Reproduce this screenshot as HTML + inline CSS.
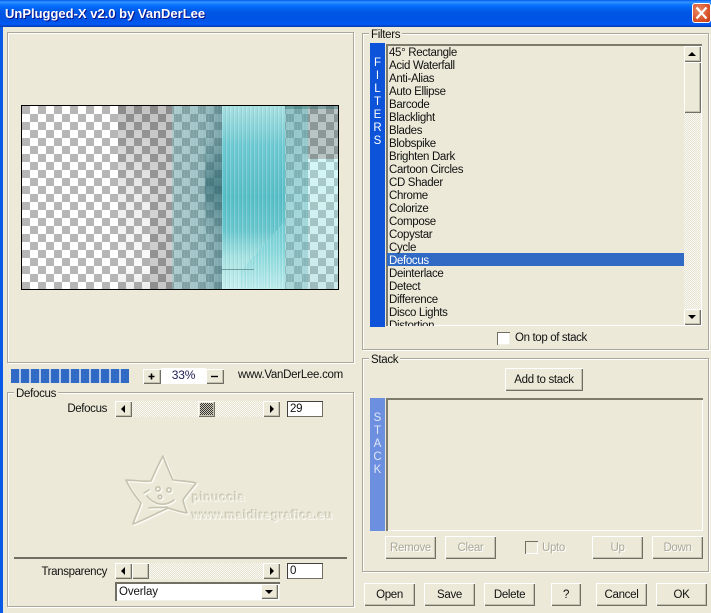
<!DOCTYPE html>
<html><head><meta charset="utf-8"><title>UnPlugged-X</title>
<style>
html,body{margin:0;padding:0}
body{width:711px;height:613px;overflow:hidden;background:#ece9d8;position:relative;font-family:"Liberation Sans",sans-serif;font-size:11px;color:#111}
div,span{position:absolute;box-sizing:border-box}
.t{white-space:nowrap;line-height:15px;height:15px}
.s{font-size:11.5px;letter-spacing:-.36px}
.fr{border:1px solid #aca899;box-shadow:inset 1px 1px #fff,1px 1px #fff}
.lb{background:#ece9d8;padding:0 2px;line-height:15px;height:13px;white-space:nowrap;font-size:11.5px;letter-spacing:-.3px}
.b{background:#ece9d8;box-shadow:inset 1px 1px #fff,inset -1px -1px #716f64,inset -2px -2px #c4c1b0;text-align:center;font-size:11.5px;letter-spacing:-.32px;white-space:nowrap;line-height:25px}
.dis{color:#aca899;text-shadow:1px 1px #fff}
.sink{background:#ece9d8;box-shadow:inset 2px 2px #7d7b6c,inset -1px -1px #fff}
.inp{background:#fff;box-shadow:inset 1px 1px #404040,inset -1px -1px #716f64;font-size:11.5px;line-height:16px;padding-left:3px;letter-spacing:-.3px}
.dith{background:repeating-conic-gradient(#f9f8f2 0 25%,#e6e3d2 0 50%) 0 0/2px 2px}
.bar{color:#fff;text-align:center;font-size:11.5px;line-height:15px;width:15px}
.u{width:0;height:0;border-left:4px solid transparent;border-right:4px solid transparent;border-bottom:4px solid #000}
.d{width:0;height:0;border-left:4px solid transparent;border-right:4px solid transparent;border-top:4px solid #000}
.l{width:0;height:0;border-top:4px solid transparent;border-bottom:4px solid transparent;border-right:4px solid #000}
.r{width:0;height:0;border-top:4px solid transparent;border-bottom:4px solid transparent;border-left:4px solid #000}
.i{left:389px;font-size:11.5px;letter-spacing:-.34px;line-height:15px;height:15px;white-space:nowrap}
</style></head><body>

<!-- title bar -->
<div style="left:0;top:0;width:711px;height:27px;background:linear-gradient(#0058ee 0,#3593ff 2px,#288eff 3px,#127dff 4px,#036ffc 6px,#0262ee 9px,#0057e5 12px,#0054e3 18px,#0055eb 22px,#005bf5 24px,#0046c8 26px,#003dae 27px)"></div>
<div style="left:5px;top:6px;color:#fff;font-weight:bold;font-size:13px;line-height:16px;white-space:nowrap;text-shadow:1px 1px #0f1089;letter-spacing:0">UnPlugged-X v2.0 by VanDerLee</div>
<div style="left:692px;top:3px;width:19px;height:20px;border:1px solid #fff;border-radius:3px;background:radial-gradient(circle at 35% 35%,#e88a66,#d9542b 60%,#c23a14)">
<svg width="17" height="18" style="position:absolute;left:0;top:0"><path d="M3.5 3.5L13.5 14.5M13.5 3.5L3.5 14.5" stroke="#fff" stroke-width="2.2" fill="none"/></svg></div>
<div style="left:0;top:27px;width:3px;height:586px;background:#0a5ae8"></div>

<!-- preview frame -->
<div class="fr" style="left:7px;top:32px;width:347px;height:331px"></div>
<div style="left:21px;top:105px;width:318px;height:185px;border:1px solid #000;overflow:hidden;background:repeating-conic-gradient(#fff 0 25%,#b6b6b6 0 50%) 0 0/16px 16px">
 <div style="left:96px;top:0;width:32px;height:183px;background:linear-gradient(rgba(0,0,0,.24),rgba(0,0,0,.07) 50%,rgba(0,0,0,.02) 88%,rgba(0,0,0,.08))"></div>
 <div style="left:128px;top:0;width:22px;height:183px;background:linear-gradient(rgba(0,0,0,.24),rgba(0,0,0,.16) 50%,rgba(0,0,0,.22))"></div>
 <div style="left:150px;top:0;width:50px;height:183px;background:repeating-linear-gradient(90deg,rgba(255,255,255,.08) 0 1px,transparent 1px 3px),linear-gradient(90deg,rgba(70,140,145,.45),rgba(70,140,145,.52) 60%,rgba(50,115,125,.66))"></div>
 <div style="left:183px;top:30px;width:17px;height:100px;background:linear-gradient(transparent,rgba(30,90,100,.5) 50%,transparent)"></div>
 <div style="left:200px;top:0;width:63px;height:183px;background:repeating-linear-gradient(90deg,rgba(255,255,255,.2) 0 1px,transparent 1px 3px,rgba(0,80,90,.07) 3px 4px),linear-gradient(#a8e0e2 0,#6fcad2 22%,#58bfc8 50%,#6ac8ce 68%,#a6e2e2 82%,#c8efef 100%)"></div>
 <div style="left:200px;top:0;width:63px;height:183px;background:repeating-linear-gradient(90deg,rgba(255,255,255,.22) 0 1px,transparent 1px 3px),linear-gradient(rgba(110,205,210,.6),rgba(120,210,215,.62) 80%,rgba(170,228,230,.45));clip-path:polygon(100% 63%,100% 100%,30% 100%,30% 90%)"></div>
 <div style="left:200px;top:163px;width:32px;height:1px;background:#6f9d9e"></div>
 <div style="left:263px;top:0;width:23px;height:183px;background:repeating-linear-gradient(90deg,rgba(255,255,255,.08) 0 1px,transparent 1px 3px),linear-gradient(rgba(70,150,155,.6),rgba(90,185,190,.58) 50%,rgba(100,180,185,.55))"></div>
 <div style="left:286px;top:0;width:30px;height:53px;background:rgba(70,100,100,.38)"></div>
 <div style="left:286px;top:53px;width:30px;height:130px;background:linear-gradient(rgba(150,235,235,.4),rgba(120,195,200,.38))"></div>
 <div style="left:263px;top:0;width:53px;height:3px;background:rgba(40,110,110,.4)"></div>
</div>

<!-- progress -->
<div style="left:11px;top:369px;width:118px;height:14px;background:repeating-linear-gradient(90deg,#316ac5 0 8px,#b4c8e8 8px 10px)"></div>
<div class="b" style="left:143px;top:369px;width:18px;height:15px"></div>
<svg width="18" height="15" style="position:absolute;left:143px;top:369px"><path d="M5.5 7.5h6M8.5 4.5v6" stroke="#000" stroke-width="1.6"/></svg>
<div style="left:161px;top:368px;width:45px;height:16px;background:#fff;text-align:center;line-height:15px;font-size:12px;color:#1c1c50;letter-spacing:-.2px">33%</div>
<div class="b" style="left:206px;top:369px;width:18px;height:15px"></div>
<svg width="18" height="15" style="position:absolute;left:206px;top:369px"><path d="M5 7.5h7" stroke="#000" stroke-width="1.4"/></svg>
<div class="t s" style="left:238px;top:368px;letter-spacing:-.28px">www.VanDerLee.com</div>

<!-- defocus frame -->
<div class="fr" style="left:7px;top:392px;width:347px;height:215px"></div>
<div class="lb" style="left:14px;top:387px">Defocus</div>
<div class="t s" style="right:604px;top:402px">Defocus</div>
<div class="dith" style="left:132px;top:401px;width:132px;height:16px"></div>
<div class="b" style="left:115px;top:401px;width:17px;height:16px"><div class="l" style="left:6px;top:4px"></div></div>
<div class="b" style="left:263px;top:401px;width:17px;height:16px"><div class="r" style="left:7px;top:4px"></div></div>
<div class="b" style="left:198px;top:401px;width:17px;height:16px"><div style="left:2px;top:2px;width:13px;height:12px;background:repeating-conic-gradient(#333 0 25%,#d0cdbc 0 50%) 0 0/2px 2px"></div></div>
<div class="inp" style="left:287px;top:401px;width:36px;height:16px">29</div>

<!-- watermark -->
<svg width="90" height="80" viewBox="0 0 90 80" style="position:absolute;left:120px;top:450px">
<g fill="none" stroke-linejoin="round" stroke-linecap="round">
<g stroke="#fbfaf2" stroke-width="2.4" transform="translate(1 1)">
<path d="M43 6C46 14 50 24 53 30C60 31 69 31 76 33C71 40 66 45 63 50C64 55 66 60 67 63C60 62 54 60 48 58C37 63 24 70 13 74C15 67 19 60 21 53C15 46 9 37 6 30C14 30 24 32 31 31C35 22 39 13 43 6Z"/>
<path d="M24 43l5-3M27 46c7 9 18 11 27 4M29 58c6-1 13 0 18-1"/><circle cx="38" cy="39" r="2.2"/><circle cx="49" cy="40" r="2.2"/><circle cx="40" cy="47" r="1.8"/>
</g>
<g stroke="#c6c2af" stroke-width="1.6">
<path d="M43 6C46 14 50 24 53 30C60 31 69 31 76 33C71 40 66 45 63 50C64 55 66 60 67 63C60 62 54 60 48 58C37 63 24 70 13 74C15 67 19 60 21 53C15 46 9 37 6 30C14 30 24 32 31 31C35 22 39 13 43 6Z"/>
<path d="M24 43l5-3M27 46c7 9 18 11 27 4M29 58c6-1 13 0 18-1"/><circle cx="38" cy="39" r="2.2"/><circle cx="49" cy="40" r="2.2"/><circle cx="40" cy="47" r="1.8"/>
</g></g></svg>
<div class="t" style="left:192px;top:490px;font-size:12px;font-weight:bold;letter-spacing:.55px;color:#e6e3d3;text-shadow:1px 1px #faf9f1,-1px -1px #c6c2af">pinuccia</div>
<div class="t" style="left:192px;top:508px;font-size:12px;font-weight:bold;letter-spacing:.5px;color:#e6e3d3;text-shadow:1px 1px #faf9f1,-1px -1px #c6c2af">www.maidiregrafica.eu</div>

<div style="left:14px;top:557px;width:333px;height:2px;background:#716f64"></div>
<div class="t s" style="right:604px;top:565px">Transparency</div>
<div class="dith" style="left:132px;top:563px;width:132px;height:16px"></div>
<div class="b" style="left:115px;top:563px;width:17px;height:16px"><div class="l" style="left:6px;top:4px"></div></div>
<div class="b" style="left:132px;top:563px;width:17px;height:16px"></div>
<div class="b" style="left:263px;top:563px;width:17px;height:16px"><div class="r" style="left:7px;top:4px"></div></div>
<div class="inp" style="left:287px;top:563px;width:36px;height:16px">0</div>
<div style="left:115px;top:582px;width:165px;height:19px;background:#fff;box-shadow:inset 2px 2px #716f64,inset -1px -1px #f4f2e8;font-size:11.5px;line-height:21px;padding-left:4px;letter-spacing:-.1px">Overlay</div>
<div class="b" style="left:261px;top:584px;width:17px;height:15px"><div class="d" style="left:4px;top:6px"></div></div>

<!-- filters frame -->
<div class="fr" style="left:362px;top:33px;width:347px;height:317px"></div>
<div class="lb" style="left:369px;top:28px">Filters</div>
<div style="left:370px;top:43px;width:15px;height:284px;background:#0d53d9"></div>
<div class="bar" style="left:370px;top:56px">F</div><div class="bar" style="left:370px;top:69px">I</div><div class="bar" style="left:370px;top:82px">L</div><div class="bar" style="left:370px;top:95px">T</div><div class="bar" style="left:370px;top:108px">E</div><div class="bar" style="left:370px;top:121px">R</div><div class="bar" style="left:370px;top:134px">S</div>
<div class="sink" style="left:386px;top:44px;width:316px;height:282px;overflow:hidden"></div>
<div style="left:387px;top:253px;width:297px;height:13px;background:#316ac5"></div>
<div class="i" style="top:46px">45° Rectangle</div>
<div class="i" style="top:59px">Acid Waterfall</div>
<div class="i" style="top:72px">Anti-Alias</div>
<div class="i" style="top:85px">Auto Ellipse</div>
<div class="i" style="top:98px">Barcode</div>
<div class="i" style="top:111px">Blacklight</div>
<div class="i" style="top:124px">Blades</div>
<div class="i" style="top:137px">Blobspike</div>
<div class="i" style="top:150px">Brighten Dark</div>
<div class="i" style="top:163px">Cartoon Circles</div>
<div class="i" style="top:176px">CD Shader</div>
<div class="i" style="top:189px">Chrome</div>
<div class="i" style="top:202px">Colorize</div>
<div class="i" style="top:215px">Compose</div>
<div class="i" style="top:228px">Copystar</div>
<div class="i" style="top:241px">Cycle</div>
<div class="i" style="top:254px;color:#fff">Defocus</div>
<div class="i" style="top:267px">Deinterlace</div>
<div class="i" style="top:280px">Detect</div>
<div class="i" style="top:293px">Difference</div>
<div class="i" style="top:306px">Disco Lights</div>
<div style="left:389px;top:319px;height:7px;width:60px;overflow:hidden"><div class="i" style="left:0;top:0">Distortion</div></div>
<div class="dith" style="left:684px;top:46px;width:17px;height:279px"></div>
<div class="b" style="left:684px;top:46px;width:17px;height:16px"><div class="u" style="left:4px;top:6px"></div></div>
<div class="b" style="left:684px;top:62px;width:17px;height:51px"></div>
<div class="b" style="left:684px;top:309px;width:17px;height:16px"><div class="d" style="left:4px;top:6px"></div></div>
<div style="left:497px;top:332px;width:13px;height:13px;background:#fff;box-shadow:inset 1px 1px #716f64,inset -1px -1px #f1efe2"></div>
<div class="t s" style="left:515px;top:331px">On top of stack</div>

<!-- stack frame -->
<div class="fr" style="left:362px;top:358px;width:347px;height:214px"></div>
<div class="lb" style="left:369px;top:353px">Stack</div>
<div class="b" style="left:505px;top:368px;width:78px;height:23px">Add to stack</div>
<div style="left:370px;top:398px;width:15px;height:133px;background:#6d8fe0"></div>
<div class="bar" style="left:370px;top:411px;color:#dfe6f8">S</div><div class="bar" style="left:370px;top:424px;color:#dfe6f8">T</div><div class="bar" style="left:370px;top:437px;color:#dfe6f8">A</div><div class="bar" style="left:370px;top:450px;color:#dfe6f8">C</div><div class="bar" style="left:370px;top:463px;color:#dfe6f8">K</div>
<div class="sink" style="left:386px;top:398px;width:317px;height:133px"></div>
<div class="b dis" style="left:385px;top:536px;width:51px;height:23px">Remove</div>
<div class="b dis" style="left:445px;top:536px;width:51px;height:23px">Clear</div>
<div style="left:525px;top:541px;width:13px;height:13px;background:#ece9d8;box-shadow:inset 1px 1px #716f64,inset -1px -1px #fff"></div>
<div class="t dis s" style="left:542px;top:541px">Upto</div>
<div class="b dis" style="left:592px;top:536px;width:51px;height:23px">Up</div>
<div class="b dis" style="left:652px;top:536px;width:51px;height:23px">Down</div>

<!-- bottom buttons -->
<div class="b" style="left:364px;top:583px;width:51px;height:23px">Open</div>
<div class="b" style="left:424px;top:583px;width:51px;height:23px">Save</div>
<div class="b" style="left:484px;top:583px;width:51px;height:23px">Delete</div>
<div class="b" style="left:551px;top:583px;width:30px;height:23px">?</div>
<div class="b" style="left:596px;top:583px;width:51px;height:23px">Cancel</div>
<div class="b" style="left:656px;top:583px;width:51px;height:23px">OK</div>
</body></html>
